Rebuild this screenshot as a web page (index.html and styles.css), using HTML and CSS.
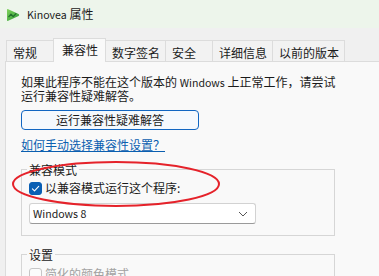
FILE: index.html
```html
<!DOCTYPE html>
<html lang="zh-CN">
<head>
<meta charset="utf-8">
<title>Kinovea 属性</title>
<link rel="stylesheet" href="styles.css">
</head>
<body>
<div class="window">
  <header class="titlebar">
    <svg class="logo" width="14" height="14" viewBox="0 0 14 14">
      <defs>
        <linearGradient id="lg" x1="0" y1="0" x2="1" y2="1">
          <stop offset="0" stop-color="#7fd35a"/>
          <stop offset="1" stop-color="#2f9a3a"/>
        </linearGradient>
      </defs>
      <path d="M2.2 1.2 Q1 0.6 1 2 L1 12 Q1 13.4 2.2 12.8 L12.6 7.9 Q13.8 7 12.6 6.1 Z" fill="url(#lg)"/>
      <path d="M2.5 9.2 L5 6.2 L7.2 8.6 L10.2 5.4" fill="none" stroke="#1f6e2c" stroke-width="1.3" stroke-linejoin="round"/>
    </svg>
    <span class="title"><span class="latin">Kinovea</span> 属性</span>
  </header>
  <main class="body">
    <nav class="tabs">
      <div class="tab tab-short">常规</div>
      <div class="tab tab-active">兼容性</div>
      <div class="tab">数字签名</div>
      <div class="tab tab-short">安全</div>
      <div class="tab">详细信息</div>
      <div class="tab">以前的版本</div>
    </nav>
    <section class="panel">
      <p class="intro">如果此程序不能在这个版本的 <span class="latin">Windows</span> 上正常工作，请尝试运行兼容性疑难解答。</p>
      <button class="btn">运行兼容性疑难解答</button>
      <a class="link" href="#">如何手动选择兼容性设置？</a>
      <fieldset class="group group-compat">
        <legend>兼容模式</legend>
        <label class="check">
          <span class="box box-on">
            <svg width="13" height="13" viewBox="0 0 13 13"><path d="M3.4 6.8 L5.5 8.8 L9.7 4.4" fill="none" stroke="#fff" stroke-width="1.1" stroke-linecap="round" stroke-linejoin="round"/></svg>
          </span>
          <span>以兼容模式运行这个程序:</span>
        </label>
        <div class="select">
          <span class="latin">Windows 8</span>
          <svg class="chev" width="10" height="6" viewBox="0 0 10 6"><path d="M1 1 L5 5 L9 1" fill="none" stroke="#555" stroke-width="1"/></svg>
        </div>
      </fieldset>
      <fieldset class="group group-settings">
        <legend>设置</legend>
        <label class="check check-disabled">
          <span class="box"></span>
          <span>简化的颜色模式</span>
        </label>
      </fieldset>
      <svg class="ring" width="379" height="276" viewBox="0 0 379 276">
        <ellipse cx="116" cy="184" rx="103" ry="22" fill="none" stroke="#e5222a" stroke-width="2"/>
      </svg>
    </section>
  </main>
</div>
</body>
</html>
```

FILE: styles.css
```css
* { box-sizing: border-box; }
html, body { margin: 0; padding: 0; }
body {
  width: 379px;
  height: 276px;
  overflow: hidden;
  font-family: "Noto Sans CJK SC", "Noto Sans", sans-serif;
  font-size: 12px;
  color: #1a1a1a;
  background: #f0f0f0;
}
.latin { font-size: 10.6px; }
.window { position: relative; width: 379px; height: 276px; overflow: hidden; }
.titlebar {
  height: 28px;
  background: #edf5eb;
  display: flex;
  align-items: center;
  padding-left: 6px;
  padding-top: 1px;
}
.title { margin-left: 7px; line-height: 14px; color: #1a1a1a; }
.body { padding-top: 9px; }
.tabs {
  display: flex;
  align-items: flex-end;
  padding-left: 6px;
  height: 24px;
  position: relative;
  z-index: 1;
}
.tab {
  height: 21px;
  padding: 3px 5px 0 6px;
  line-height: 18px;
  border: 1px solid #dcdcdc;
  border-bottom: none;
  background: #f2f2f2;
  margin-right: -1px;
  white-space: nowrap;
}
.tab-short { min-width: 48px; }
.tab-active {
  height: 24px;
  margin-bottom: -1px;
  padding: 1px 7px 0 8px;
  line-height: 20px;
  background: #f9f9f9;
  position: relative;
  z-index: 2;
}
.panel {
  position: relative;
  margin-left: 5px;
  height: 215px;
  background: #f9f9f9;
  border-top: 1px solid #dcdcdc;
  border-left: 1px solid #dcdcdc;
  padding: 13px 0 0 15px;
}
.intro {
  margin: 0;
  width: 318px;
  line-height: 13px;
}
.btn {
  display: block;
  margin-top: 8px;
  width: 178px;
  height: 20px;
  padding: 0;
  font: inherit;
  line-height: 18px;
  color: #1a1a1a;
  background: #f5f9fd;
  border: 1px solid #1166c2;
  border-radius: 4px;
}
.link {
  display: block;
  width: fit-content;
  margin-top: 8px;
  line-height: 14px;
  color: #0b5fb0;
  text-decoration: underline;
  text-underline-offset: 1px;
}
.group {
  margin: 0;
  width: 314px;
  border: 1px solid #d6d6d6;
  padding: 0 0 0 7px;
  min-inline-size: 0;
}
.group legend {
  padding: 0 2px;
  margin-left: -2px;
  line-height: 13px;
}
.group-compat {
  margin-top: 11px;
  height: 73px;
}
.group-settings {
  margin-top: 12px;
  height: 40px;
}
.check {
  display: flex;
  align-items: center;
  gap: 3px;
  margin-top: 5px;
  height: 14px;
  line-height: 14px;
}
.box {
  width: 13px;
  height: 13px;
  border-radius: 3px;
  border: 1px solid #8c8c8c;
  background: #fff;
  flex: none;
  display: block;
}
.box svg { display: block; margin: -1px; }
.box-on { background: #0a5fb4; border-color: #0a5fb4; }
.check-disabled { color: #a2a2a2; margin-top: 6px; }
.check-disabled .box { border-color: #c6c6c6; background: #fbfbfb; }
.select {
  margin-top: 8px;
  width: 227px;
  height: 21px;
  background: #fff;
  border: 1px solid #d2d2d2;
  border-bottom-color: #9a9a9a;
  border-radius: 3px;
  display: flex;
  align-items: center;
  justify-content: space-between;
  padding: 0 7px 0 3px;
}
.chev { display: block; }
.ring {
  position: absolute;
  left: -6px;
  top: -62px;
  pointer-events: none;
}
```
